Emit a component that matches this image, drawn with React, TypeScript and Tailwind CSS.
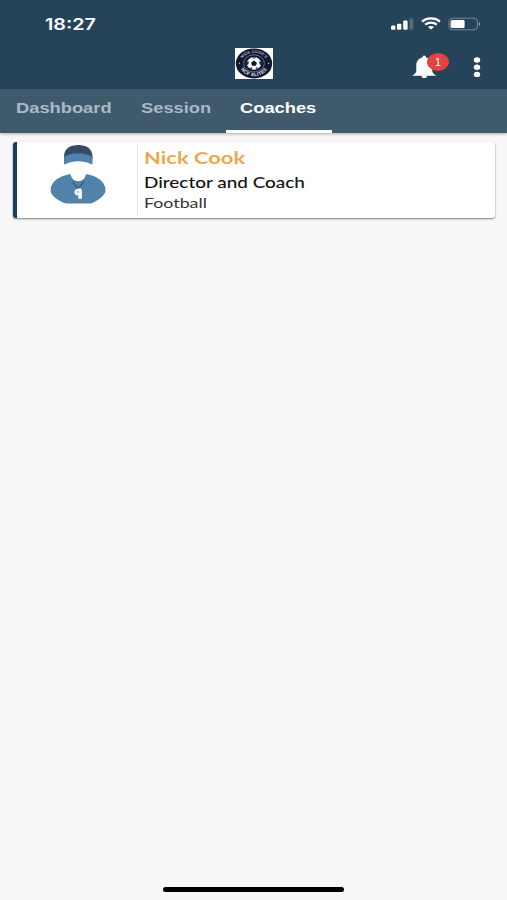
const tabs = [
  { label: "Dashboard", box: "w-[125px] pl-[16px]", active: false },
  { label: "Session", box: "w-[101px] pl-[16px]", active: false },
  { label: "Coaches", box: "w-[106px] pl-[14px]", active: true },
];

const StatusIcons = () => (
  <div className="flex items-center pr-[26px]">
    <svg width="23" height="14" viewBox="0 0 23 14" fill="#fff">
      <rect x="0" y="8.6" width="4.4" height="4.2" rx="1.2" />
      <rect x="6" y="6.8" width="4.4" height="6" rx="1.2" />
      <rect x="12.2" y="3.6" width="4.4" height="9.2" rx="1.2" />
      <rect x="18.4" y="1.2" width="4" height="11.6" rx="1.2" fillOpacity="0.2" />
    </svg>
    <svg className="ml-[7px]" width="20" height="14" viewBox="0 0 20 14" fill="none" stroke="#fff">
      <path d="M1 4.6C5.8 0.4 14.2 0.4 19 4.6" strokeWidth="2.3" />
      <path d="M4.2 7.6C7.4 4.9 12.6 4.9 15.8 7.6" strokeWidth="2.2" />
      <path d="M7 10.1C8.6 8.7 11.4 8.7 13 10.1L10 12.6Z" fill="#fff" stroke="none" />
    </svg>
    <svg className="ml-[7px]" width="33" height="14" viewBox="0 0 33 14">
      <rect x="0.9" y="1.2" width="28.6" height="11.6" rx="3.6" fill="none" stroke="#fff" strokeOpacity="0.36" />
      <rect x="2.6" y="2.9" width="14" height="8.2" rx="1.5" fill="#fff" />
      <path d="M31 4.8C32.6 5.6 32.6 8.4 31 9.2Z" fill="#fff" fillOpacity="0.5" />
    </svg>
  </div>
);

const ClubLogo = () => (
  <svg className="mt-px" width="38" height="31" viewBox="0 0 38 31" preserveAspectRatio="none">
    <defs>
      <path id="logo-top" d="M6 15.5A13 10.6 0 0 1 32 15.5" />
      <path id="logo-bottom" d="M4 15A15 13.3 0 0 0 34 15" />
    </defs>
    <rect width="38" height="31" fill="#fff" />
    <ellipse cx="19" cy="15.4" rx="18.2" ry="15" fill="#0d1730" />
    <ellipse cx="19" cy="15.4" rx="10.4" ry="8.6" fill="none" stroke="#8d96a5" strokeWidth="0.7" />
    <text fill="#b4bac6" fontFamily="Liberation Sans, sans-serif" fontWeight="700" fontSize="4">
      <textPath href="#logo-top" startOffset="50%" textAnchor="middle">NICK COOK&apos;S</textPath>
    </text>
    <text fill="#e4e7ec" fontFamily="Liberation Sans, sans-serif" fontWeight="700" fontSize="4.8" letterSpacing="0.3">
      <textPath href="#logo-bottom" startOffset="50%" textAnchor="middle">NCF ELITES</textPath>
    </text>
    <circle cx="4.4" cy="15.4" r="0.8" fill="#c9a765" />
    <circle cx="33.6" cy="15.4" r="0.8" fill="#c9a765" />
    <ellipse cx="19" cy="15.4" rx="7.2" ry="6.3" fill="#f3f5f8" />
    <path
      d="M19 12.6L21.9 14.7L20.9 17.7H17.1L16.1 14.7ZM16.8 9.4H21.2L19 10.8ZM12 14L13.8 13.2L13.4 16.2L12.1 17ZM26 14L24.2 13.2L24.6 16.2L25.9 17ZM14.8 20.2L16.4 19.1L17.4 21.1ZM23.2 20.2L21.6 19.1L20.6 21.1Z"
      fill="#0d1730"
    />
  </svg>
);

const Notifications = () => (
  <div className="relative h-[28px] w-[37px]">
    <svg className="absolute left-0 top-[2px]" width="25" height="25" viewBox="0 0 25 25" fill="#fff">
      <path d="M10.4 2.6C10.4 -0.1 14 -0.1 14 2.6C18.2 3.6 20.2 6.7 20.2 10.4V15.4C20.2 17.5 21.6 18.7 24.4 20.8H0.2C3 18.7 4.3 17.5 4.3 15.4V10.4C4.3 6.7 6.2 3.6 10.4 2.6Z" />
      <path d="M9.3 20.4H15.2C15 24 9.5 24 9.3 20.4Z" />
    </svg>
    <div className="absolute left-[15px] top-0 flex h-[18px] w-[22px] items-center justify-center rounded-[50%] bg-[#e34441] font-['Liberation_Sans',sans-serif] text-[11px] leading-none text-white">
      1
    </div>
  </div>
);

const CoachAvatar = () => (
  <svg width="56" height="59" viewBox="0 0 56 59">
    <path d="M14 14V12C14 3.6 20 0 28.2 0S42.5 3.6 42.5 12V14Z" fill="#334a6a" />
    <path d="M14 12.2C20 7 36 7 42.5 12.2V18.4C42.5 19.4 41.6 19.5 40.8 19C34 15.4 22.5 15.4 15.7 19C14.9 19.5 14 19.4 14 18.4Z" fill="#5082ab" />
    <path
      d="M20.5 29C22 38.6 34.5 38.6 36 29C47 31 55.5 36.2 55.5 45.2C55.5 48.8 52 53 43 57.8Q41.8 58.4 40 58.4H16.5Q14.5 58.4 13 57.6C4 53.2 0.6 48.8 0.6 45.2C0.6 36.2 9.5 31 20.5 29Z"
      fill="#5082aa"
    />
    <path d="M22.3 36.5L28.2 43.8L34 36.5" fill="none" stroke="#334f6d" strokeWidth="1.1" />
    <path d="M28.3 43.4C31 43 32 44.4 32 46V53.7H28.2V50.6C25.5 50.4 24.4 49 24.4 47.2C24.4 45 26 43.8 28.3 43.4Z" fill="#f3f6f8" />
    <circle cx="27.9" cy="47" r="1.2" fill="#b5cad9" />
  </svg>
);

export default function App() {
  return (
    <div className="flex h-[900px] w-[507px] flex-col overflow-hidden bg-[#f7f7f7]">
      <header className="h-[89px] bg-[#264459]">
        <div className="flex h-[47px] items-center justify-between pl-[45px]">
          <span className="origin-left scale-x-[1.23] font-['Inter',sans-serif] text-[16px] font-semibold leading-none text-white">
            18:27
          </span>
          <StatusIcons />
        </div>
        <div className="grid grid-cols-[1fr_38px_1fr] items-start">
          <span />
          <ClubLogo />
          <div className="flex items-center justify-end gap-[24px] pr-[26px] pt-[6px]">
            <Notifications />
            <svg width="8" height="22" viewBox="0 0 8 22" fill="#fff">
              <ellipse cx="4" cy="4" rx="3.2" ry="2.7" />
              <ellipse cx="4" cy="11.3" rx="3.2" ry="2.7" />
              <ellipse cx="4" cy="18.4" rx="3.2" ry="2.7" />
            </svg>
          </div>
        </div>
      </header>

      <nav className="flex h-[44px] bg-[#3f5a6d] font-['Liberation_Sans',sans-serif] text-[15px] font-bold shadow-[0_1px_3px_rgba(0,0,0,0.3)]">
        {tabs.map((tab) => (
          <div
            key={tab.label}
            className={`${tab.box} border-b-[3px] pt-[10px] leading-[18px] ${
              tab.active ? "border-white text-white" : "border-transparent text-[#a9bac6]"
            }`}
          >
            <span className="inline-block origin-left scale-x-[1.22]">{tab.label}</span>
          </div>
        ))}
      </nav>

      <main className="flex-1 pl-[13px] pr-[12px] pt-[9px]">
        <div className="flex h-[76px] rounded-[3px] border-l-4 border-[#1c415c] bg-white shadow-[0_1px_2px_rgba(0,0,0,0.5)]">
          <div className="my-[2px] flex w-[121px] justify-center border-r border-[#e9e9e9] pl-[2px] pt-[1px]">
            <CoachAvatar />
          </div>
          <div className="flex flex-col items-start pl-[6px] pt-[5px] font-['Lato',sans-serif]">
            <span className="origin-left scale-x-[1.29] text-[17px] font-bold leading-[22px] text-[#eba94f]">Nick Cook</span>
            <span className="mt-[3px] origin-left scale-x-[1.26] text-[15px] font-medium leading-[20px] text-[#111]">
              Director and Coach
            </span>
            <span className="mt-px origin-left scale-x-[1.27] text-[14px] leading-[20px] text-[#333]">Football</span>
          </div>
        </div>
      </main>

      <footer className="flex h-[13px] justify-center">
        <div className="h-[5px] w-[181px] rounded-full bg-black" />
      </footer>
    </div>
  );
}
